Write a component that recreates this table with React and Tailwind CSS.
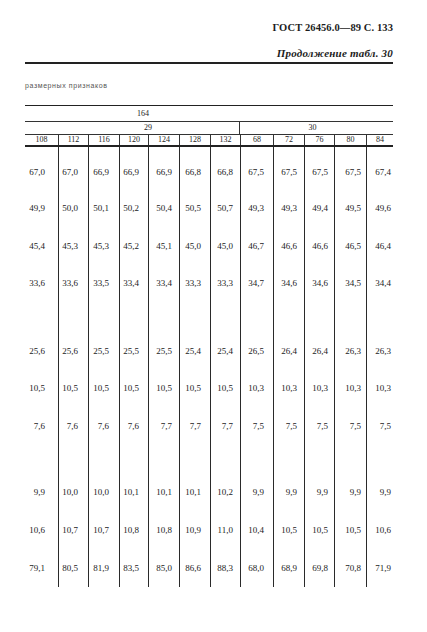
import React from "react";

const widths = ["w-[33px]", "w-[30px]", "w-[31px]", "w-[29px]", "w-[31px]", "w-[31px]", "w-[30px]", "w-[33px]", "w-[31px]", "w-[30px]", "w-[32px]", "w-[27px]"];
const pads = ["pr-[13px]", "pr-[10px]", "pr-[10px]", "pr-[9px]", "pr-[7px]", "pr-[9px]", "pr-[7px]", "pr-[9px]", "pr-[7px]", "pr-[6px]", "pr-[5px]", "pr-[2px]"];
const heads = ["108", "112", "116", "120", "124", "128", "132", "68", "72", "76", "80", "84"];

const data = [
  ["67,0", "67,0", "66,9", "66,9", "66,9", "66,8", "66,8", "67,5", "67,5", "67,5", "67,5", "67,4"],
  ["49,9", "50,0", "50,1", "50,2", "50,4", "50,5", "50,7", "49,3", "49,3", "49,4", "49,5", "49,6"],
  ["45,4", "45,3", "45,3", "45,2", "45,1", "45,0", "45,0", "46,7", "46,6", "46,6", "46,5", "46,4"],
  ["33,6", "33,6", "33,5", "33,4", "33,4", "33,3", "33,3", "34,7", "34,6", "34,6", "34,5", "34,4"],
  null,
  ["25,6", "25,6", "25,5", "25,5", "25,5", "25,4", "25,4", "26,5", "26,4", "26,4", "26,3", "26,3"],
  ["10,5", "10,5", "10,5", "10,5", "10,5", "10,5", "10,5", "10,3", "10,3", "10,3", "10,3", "10,3"],
  ["7,6", "7,6", "7,6", "7,6", "7,7", "7,7", "7,7", "7,5", "7,5", "7,5", "7,5", "7,5"],
  null,
  ["9,9", "10,0", "10,0", "10,1", "10,1", "10,1", "10,2", "9,9", "9,9", "9,9", "9,9", "9,9"],
  ["10,6", "10,7", "10,7", "10,8", "10,8", "10,9", "11,0", "10,4", "10,5", "10,5", "10,5", "10,6"],
  ["79,1", "80,5", "81,9", "83,5", "85,0", "86,6", "88,3", "68,0", "68,9", "69,8", "70,8", "71,9"],
];

const heights = ["h-[36px]", "h-[36px]", "h-[40px]", "h-[34px]", "h-[34px]", "h-[34px]", "h-[40px]", "h-[36px]", "h-[30px]", "h-[36px]", "h-[40px]", "h-[36px]"];

export default function App() {
  return (
    <div
      className="w-[427px] h-[632px] bg-white text-[#1c1c1c] overflow-hidden"
      style={{ fontFamily: '"Liberation Serif", "DejaVu Serif", serif' }}
    >
      <div className="ml-[25px] w-[368px]">
        <div className="pt-[22px] h-[34px] flex justify-end">
          <span className="text-[10.5px] leading-[12px] font-bold tracking-[0.1px]">ГОСТ 26456.0—89 С. 133</span>
        </div>
        <div className="mt-[13px] h-[12px] flex justify-end">
          <span className="text-[11px] leading-[12px] italic font-bold tracking-[0.2px]">Продолжение табл. 30</span>
        </div>
        <div className="mt-[3px] border-t-2 border-[#222]" />
        <div
          className="mt-[17px] h-[10px] text-[7px] leading-[10px] tracking-[0.6px] text-[#555]"
          style={{ fontFamily: '"Liberation Sans", Arial, sans-serif' }}
        >
          размерных признаков
        </div>

        <div className="mt-[14px] border-t border-[#222]" />
        <div className="h-[16px] flex items-center justify-center pr-[132px] text-[8px] border-b border-[#333]">164</div>
        <div className="flex h-[13px] border-b border-[#333] text-[8px]">
          <div className="w-[215px] flex items-center justify-center pl-[32px] border-r border-[#333]">29</div>
          <div className="flex-1 flex items-center justify-center pr-[8px]">30</div>
        </div>
        <div className="flex h-[12px] border-b-2 border-[#222] text-[8px]">
          {heads.map((h, i) => (
            <div
              key={i}
              className={`${widths[i]} flex items-center justify-center ${i > 0 ? "border-l border-[#333]" : ""}`}
            >
              {h}
            </div>
          ))}
        </div>

        <div className="flex h-[440px] text-[9px]">
          {widths.map((w, c) => (
            <div key={c} className={`${w} flex flex-col ${c > 0 ? "border-l border-[#2a2a2a]" : ""}`}>
              <div className="h-[8px]" />
              {data.map((row, r) => (
                <div key={r} className={`${heights[r]} flex items-center justify-end ${pads[c]}`}>
                  {row ? row[c] : ""}
                </div>
              ))}
            </div>
          ))}
        </div>
      </div>
    </div>
  );
}
